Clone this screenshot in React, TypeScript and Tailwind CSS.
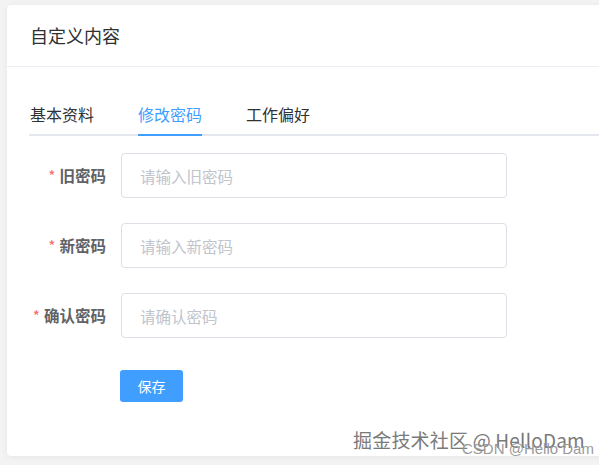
import React, { useState } from "react";

const font = { fontFamily: '"Noto Sans CJK SC", "Noto Sans", sans-serif' };

type Field = {
  label: string;
  placeholder: string;
};

const fields: Field[] = [
  { label: "旧密码", placeholder: "请输入旧密码" },
  { label: "新密码", placeholder: "请输入新密码" },
  { label: "确认密码", placeholder: "请确认密码" },
];

const tabs = ["基本资料", "修改密码", "工作偏好"];

const FormRow: React.FC<Field> = ({ label, placeholder }) => (
  <div className="flex items-center">
    <label className="w-[77px] shrink-0 text-right text-[15.5px] font-bold text-[#606266]">
      <span className="text-[#f56c6c] mr-[4px] font-normal">*</span>
      {label}
    </label>
    <input
      type="password"
      placeholder={placeholder}
      className="ml-[15px] w-[386px] h-[45px] border border-[#dcdfe6] rounded-[4px] pl-[18px] text-[15.5px] text-[#606266] placeholder:text-[#c0c4cc] outline-none bg-white"
    />
  </div>
);

export default function App() {
  const [active, setActive] = useState(1);

  return (
    <div
      className="relative w-[599px] h-[465px] overflow-hidden bg-[#f3f3f4] pt-[5px] pl-[7px]"
      style={font}
    >
      <div className="w-[640px] h-[451px] bg-white rounded-[4px] shadow-[0_1px_6px_rgba(0,0,0,0.06)]">
        <div className="h-[62px] flex items-center px-[23px] border-b border-[#ebeef5]">
          <span className="text-[18px] text-[#303133]">自定义内容</span>
        </div>
        <div className="pt-[27px] pl-[22px]">
          <div className="flex gap-[44px] border-b-2 border-[#e4e7ed] pl-[1px]">
            {tabs.map((t, i) => (
              <div
                key={t}
                onClick={() => setActive(i)}
                className={
                  "relative h-[40px] flex items-center text-[16px] cursor-pointer " +
                  (i === active ? "text-[#409eff]" : "text-[#303133]")
                }
              >
                {t}
                {i === active && (
                  <span className="absolute left-0 right-0 bottom-[-2px] h-[2px] bg-[#409eff]" />
                )}
              </div>
            ))}
          </div>
          <div className="mt-[17px] flex flex-col gap-[25px]">
            {fields.map((f) => (
              <FormRow key={f.label} {...f} />
            ))}
          </div>
          <button
            type="button"
            className="mt-[32px] ml-[91px] w-[63px] h-[32px] rounded-[3px] bg-[#409eff] text-white text-[14px]"
          >
            保存
          </button>
        </div>
      </div>

      <div className="absolute left-[353px] top-[426px] text-[19px] text-[#7a7a7a] tracking-[0.2px] [text-shadow:1px_1px_0_#fff,-1px_-1px_0_#fff]">
        掘金技术社区 @ HelloDam
      </div>
      <div
        className="absolute left-[462px] top-[441px] text-[15px] text-[#9a9a9a] leading-none"
        style={{ fontFamily: '"Liberation Sans", Arial, sans-serif' }}
      >
        CSDN @Hello Dam
      </div>
    </div>
  );
}
